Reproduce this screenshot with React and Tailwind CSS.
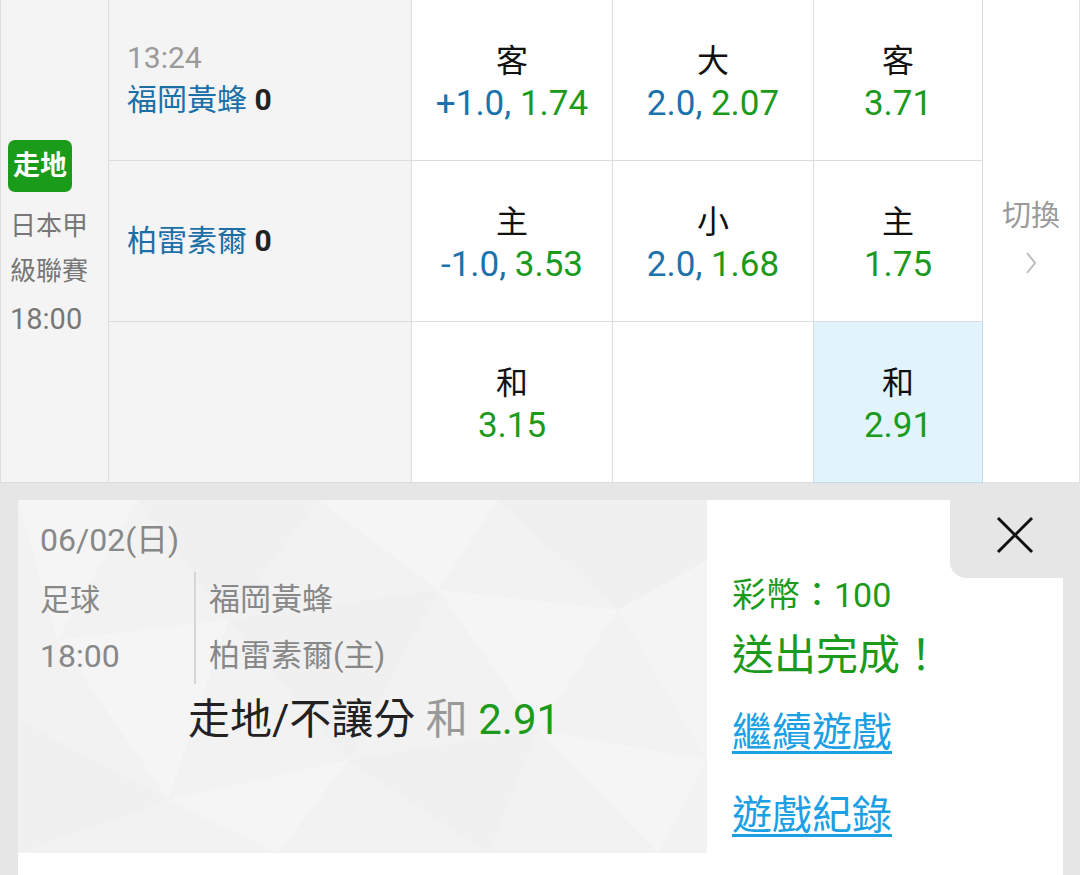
import React from 'react';

const GREEN = 'text-[#1c9a1c]';

const rows = [
  {
    time: '13:24',
    team: '福岡黃蜂',
    odds: [
      { label: '客', line: '+1.0', price: '1.74' },
      { label: '大', line: '2.0', price: '2.07' },
      { label: '客', price: '3.71' },
    ],
  },
  {
    team: '柏雷素爾',
    odds: [
      { label: '主', line: '-1.0', price: '3.53' },
      { label: '小', line: '2.0', price: '1.68' },
      { label: '主', price: '1.75' },
    ],
  },
  {
    odds: [{ label: '和', price: '3.15' }, null, { label: '和', price: '2.91', active: true }],
  },
];

function OddsCell({ cell }) {
  if (!cell) return <div className="bg-white border-r border-b border-[#d9dde1]" />;
  return (
    <div
      className={`flex flex-col items-center justify-center pt-2 border-r border-b ${
        cell.active ? 'bg-[#e1f4fc] border-[#bcdcee]' : 'bg-white border-[#d9dde1]'
      }`}
    >
      <div className="text-[32px] leading-[40px] text-[#111]">{cell.label}</div>
      <div className="text-[35px] leading-[46px] whitespace-nowrap">
        {cell.line && <span className="text-[#1b72ad]">{cell.line}, </span>}
        <span className={GREEN}>{cell.price}</span>
      </div>
    </div>
  );
}

// faint low-poly background of the ticket
function TicketPattern() {
  return (
    <svg className="absolute inset-0" width="689" height="353" viewBox="0 0 689 353">
      <rect width="689" height="353" fill="#f2f2f2" />
      <polygon points="0,0 120,0 40,140" fill="#f5f5f5" />
      <polygon points="120,0 300,0 210,120" fill="#f0f0f0" />
      <polygon points="300,0 480,0 420,90" fill="#f5f5f5" />
      <polygon points="480,0 689,0 689,60 600,110" fill="#f0f0f0" />
      <polygon points="40,140 210,120 150,300" fill="#f5f5f5" />
      <polygon points="210,120 420,90 330,260" fill="#f0f0f0" />
      <polygon points="420,90 600,110 520,230" fill="#f5f5f5" />
      <polygon points="600,110 689,60 689,260" fill="#f4f4f4" />
      <polygon points="0,220 150,300 0,353" fill="#f0f0f0" />
      <polygon points="150,300 330,260 260,353" fill="#f5f5f5" />
      <polygon points="330,260 520,230 470,353" fill="#f0f0f0" />
      <polygon points="520,230 689,260 640,353" fill="#f5f5f5" />
    </svg>
  );
}

function Zigzag() {
  const w = 38;
  let pts = '0,0';
  for (let x = 0; x < 689; x += w) pts += ` ${x + w / 2},15 ${x + w},0`;
  return (
    <svg width="689" height="16" viewBox="0 0 689 16" className="block">
      <polygon points={pts} fill="#efefef" />
    </svg>
  );
}

export default function App() {
  return (
    <div className="w-[1080px] h-[875px] overflow-hidden bg-white font-['Roboto','Noto_Sans_CJK_TC',sans-serif] flex flex-col">
      {/* odds table */}
      <div className="flex h-[483px]">
        <div className="w-[109px] bg-[#f4f4f4] border-l border-r border-b border-[#d9dde1] flex flex-col justify-center pl-[9px] pt-[2px]">
          <div className="w-[64px] h-[52px] -ml-[2px] rounded-[7px] bg-[#1a9c1a] text-white font-bold text-[27px] flex items-center justify-center">
            走地
          </div>
          <div className="mt-[12px] text-[26px] leading-[45px] text-[#777]">日本甲</div>
          <div className="text-[26px] leading-[45px] text-[#777]">級聯賽</div>
          <div className="text-[29px] leading-[50px] text-[#777]">18:00</div>
        </div>

        <div className="grid grid-cols-[303px_201px_201px_169px] grid-rows-[161px_161px_161px]">
          {rows.map((r, i) => (
            <React.Fragment key={i}>
              <div className="bg-[#f4f4f4] border-r border-b border-[#d9dde1] flex flex-col justify-center pl-[18px]">
                {r.time && <div className="text-[30px] leading-[40px] text-[#9a9a9a]">{r.time}</div>}
                {r.team && (
                  <div className="text-[30px] leading-[44px] text-[#1b6fa8]">
                    {r.team} <span className="font-bold text-[#222]">0</span>
                  </div>
                )}
              </div>
              {r.odds.map((c, j) => (
                <OddsCell key={j} cell={c} />
              ))}
            </React.Fragment>
          ))}
        </div>

        <div className="flex-1 bg-white border-r border-b border-[#e3e3e3] flex flex-col items-center justify-center pb-[11px]">
          <div className="text-[29px] leading-[40px] text-[#9a9a9a]">切換</div>
          <svg width="14" height="26" viewBox="0 0 14 26" className="mt-[14px]">
            <polyline points="3,3 11,13 3,23" fill="none" stroke="#bdbdbd" strokeWidth="2" />
          </svg>
        </div>
      </div>

      {/* bet ticket */}
      <div className="flex-1 bg-[#e6e6e6] pt-[17px] pl-[18px] pr-[17px]">
        <div className="relative flex h-[400px] bg-white">
          <div className="w-[689px] flex flex-col">
            <div className="relative h-[337px]">
              <TicketPattern />
              <div className="relative pt-[20px] pl-[22px] text-[#888]">
                <div className="text-[32px] leading-[40px]">06/02(日)</div>
                <div className="mt-[12px] flex">
                  <div className="w-[154px]">
                    <div className="text-[30px] leading-[56px]">足球</div>
                    <div className="text-[32px] leading-[56px]">18:00</div>
                  </div>
                  <div className="border-l-2 border-[#d6d6d6] pl-[13px]">
                    <div className="text-[31px] leading-[56px]">福岡黃蜂</div>
                    <div className="text-[31px] leading-[56px]">柏雷素爾(主)</div>
                  </div>
                </div>
                <div className="mt-[10px] ml-[148px] text-[42px] leading-[52px] whitespace-nowrap">
                  <span className="text-[#222]">走地/不讓分</span>{' '}
                  <span className="text-[#999]">和</span> <span className={GREEN}>2.91</span>
                </div>
              </div>
            </div>
            <Zigzag />
          </div>

          <div className="flex-1 pl-[25px] pt-[73px]">
            <div className={`text-[34px] leading-[44px] ${GREEN}`}>彩幣：100</div>
            <div className={`mt-[12px] text-[42px] leading-[54px] ${GREEN}`}>送出完成！</div>
            <a className="block mt-[24px] text-[40px] leading-[52px] text-[#1ca0e4] underline decoration-[3px] underline-offset-[5px]">
              繼續遊戲
            </a>
            <a className="block mt-[31px] text-[40px] leading-[52px] text-[#1ca0e4] underline decoration-[3px] underline-offset-[5px]">
              遊戲紀錄
            </a>
          </div>

          <div className="absolute top-0 right-0 w-[113px] h-[78px] bg-[#e6e6e6] rounded-bl-[16px] pl-[46px] pt-[16px]">
            <svg width="38" height="38" viewBox="0 0 38 38">
              <path d="M2 2 L36 36 M36 2 L2 36" stroke="#111" strokeWidth="3" />
            </svg>
          </div>
        </div>
      </div>
    </div>
  );
}
